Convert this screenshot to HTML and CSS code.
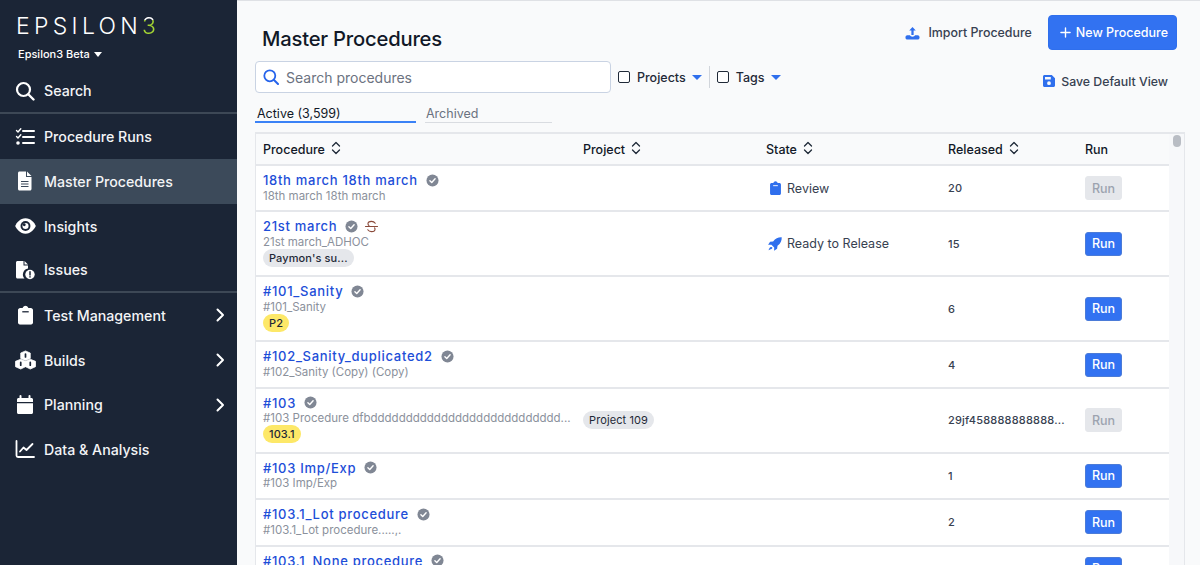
FILE: index.html
```html
<!DOCTYPE html>
<html lang="en">
<head>
    <meta charset="UTF-8">
    <meta name="viewport" content="width=device-width, initial-scale=1.0">
    <title>Master Procedures</title>
    <link rel="stylesheet" href="styles.css">
</head>
<body>
<svg class="icon-defs" aria-hidden="true">
    <symbol id="i-check" viewBox="0 0 14 14">
        <circle cx="7" cy="7" r="6.5" fill="#808794"/>
        <path d="M4.2 7.2l2 2 3.6-4" fill="none" stroke="#fff" stroke-width="1.5" stroke-linecap="round" stroke-linejoin="round"/>
    </symbol>
    <symbol id="i-sort" viewBox="0 0 10 14">
        <path d="M1.5 5L5 1.5 8.500 5M1.500 9L5 12.500 8.500 9" fill="none" stroke="currentColor" stroke-width="1.300" stroke-linecap="round" stroke-linejoin="round"/>
    </symbol>
    <symbol id="i-chevron" viewBox="0 0 10 14">
        <path d="M2.500 1.500L8 7l-5.500 5.500" fill="none" stroke="currentColor" stroke-width="2" stroke-linecap="round" stroke-linejoin="round"/>
    </symbol>
    <symbol id="i-clipboard" viewBox="0 0 14 18">
        <path d="M2 2.500h2.300C4.600 1.200 5.700.3 7 .3s2.400.9 2.700 2.200H12c1.100 0 2 .9 2 2V16c0 1.100-.9 2-2 2H2c-1.100 0-2-.9-2-2V4.500c0-1.100.9-2 2-2z" fill="currentColor"/>
    </symbol>
</svg>

<div class="app">
    <aside class="sidebar">
        <div class="logo">EPSILON<span class="logo-3">3</span></div>
        <div class="org">Epsilon3 Beta <span class="org-caret"></span></div>

        <nav class="nav">
            <a class="nav-item nav-sep" href="#">
                <svg class="nav-icon" viewBox="0 0 20 20"><circle cx="8.500" cy="8.500" r="6.500" fill="none" stroke="currentColor" stroke-width="2.200"/><path d="M13.500 13.500L18.500 18.500" stroke="currentColor" stroke-width="2.400" stroke-linecap="round"/></svg>
                <span>Search</span>
            </a>
            <a class="nav-item" href="#">
                <svg class="nav-icon" viewBox="0 0 20 20"><path d="M1.500 3.500l1.500 1.500 2.800-3.200M1.500 9.500l1.500 1.500 2.800-3.200" fill="none" stroke="currentColor" stroke-width="1.400" stroke-linecap="round" stroke-linejoin="round"/><circle cx="3" cy="16" r="1.800" fill="currentColor"/><path d="M8 4h11M8 10h11M8 16h11" stroke="currentColor" stroke-width="2" stroke-linecap="round"/></svg>
                <span>Procedure Runs</span>
            </a>
            <a class="nav-item nav-active" href="#">
                <svg class="nav-icon" viewBox="0 0 20 20"><path d="M4.500 .500h6.500v5.500h5.500v12c0 .8-.7 1.500-1.500 1.500H4.500C3.700 19.500 3 18.800 3 18V2C3 1.200 3.700.500 4.500.500zM12 .500l4.500 4.500H12z" fill="currentColor"/><path d="M6 10.500h7.500M6 13h7.500M6 15.500h7.500" stroke="#3c4a5a" stroke-width="1.100"/></svg>
                <span>Master Procedures</span>
            </a>
            <a class="nav-item" href="#">
                <svg class="nav-icon nav-icon-wide" viewBox="0 0 22 18"><path d="M11 1c5.600 0 9.300 4.700 10.800 8-1.500 3.300-5.200 8-10.800 8S1.700 12.300.2 9C1.700 5.700 5.400 1 11 1z" fill="currentColor"/><circle cx="11" cy="9" r="5.200" fill="#1b2536"/><circle cx="11" cy="9" r="3.200" fill="currentColor"/><circle cx="9.700" cy="7.700" r="1.500" fill="#1b2536"/></svg>
                <span>Insights</span>
            </a>
            <a class="nav-item nav-sep" href="#">
                <svg class="nav-icon" viewBox="0 0 20 20"><path d="M2.500 1h6v4.500h4.500v3a6 6 0 0 0-3.500 10H2.500C1.700 18.500 1 17.800 1 17V2.500C1 1.700 1.700 1 2.500 1zM9.500 1L13 4.500H9.500z" fill="currentColor"/><circle cx="15" cy="14.500" r="4.700" fill="currentColor"/><path d="M15 11.800v3.200M15 16.700v.4" stroke="#1b2536" stroke-width="1.500" stroke-linecap="round"/></svg>
                <span>Issues</span>
            </a>
            <a class="nav-item" href="#">
                <svg class="nav-icon nav-icon-clip" viewBox="0 0 14 18"><use href="#i-clipboard"/><path d="M4 6h6" stroke="#1b2536" stroke-width="1.200"/></svg>
                <span>Test Management</span>
                <svg class="nav-chevron"><use href="#i-chevron"/></svg>
            </a>
            <a class="nav-item" href="#">
                <svg class="nav-icon nav-icon-wide" viewBox="0 0 22 20"><path d="M11 .500l5 2.200v5.600l-5 2.200-5-2.200V2.700zM6 9.200l5 2.200v5.600l-5 2.500-5.500-2.500v-5.600zM16 9.200l5.500 2.200v5.600L16 19.500l-5-2.500v-5.600z" fill="currentColor" stroke="currentColor" stroke-width=".8" stroke-linejoin="round"/><path d="M11 3.800v3M6 12.500v3M16 12.500v3" stroke="#1b2536" stroke-width="1.800" stroke-linecap="round"/></svg>
                <span>Builds</span>
                <svg class="nav-chevron"><use href="#i-chevron"/></svg>
            </a>
            <a class="nav-item" href="#">
                <svg class="nav-icon" viewBox="0 0 20 20"><path d="M5.500 1v3M14.500 1v3" stroke="currentColor" stroke-width="2" stroke-linecap="round"/><path d="M3.500 3h13c.8 0 1.500.7 1.500 1.500V7H2V4.500C2 3.700 2.700 3 3.500 3zM2 8.300h16v9.200c0 .8-.7 1.500-1.500 1.500h-13c-.8 0-1.500-.7-1.500-1.500z" fill="currentColor"/></svg>
                <span>Planning</span>
                <svg class="nav-chevron"><use href="#i-chevron"/></svg>
            </a>
            <a class="nav-item" href="#">
                <svg class="nav-icon" viewBox="0 0 20 20"><path d="M1.500 2v14.500c0 .8.700 1.500 1.500 1.500h16" fill="none" stroke="currentColor" stroke-width="1.800" stroke-linecap="round"/><path d="M5 12.500l3.500-4 3 2.500 6-6" fill="none" stroke="currentColor" stroke-width="1.800" stroke-linecap="round" stroke-linejoin="round"/></svg>
                <span>Data &amp; Analysis</span>
            </a>
        </nav>
    </aside>

    <main class="main">
        <div class="top-row">
            <h1 class="page-title">Master Procedures</h1>
            <div class="top-actions">
                <a class="import-link" href="#">
                    <svg class="import-icon" viewBox="0 0 16 14"><path d="M8 .5l3.500 3.700H9.200V9H6.800V4.200H4.500z" fill="currentColor"/><path d="M.5 11.500c0-1.100.9-2 2-2h2.800c.3 1 1.400 1.500 2.700 1.500s2.400-.5 2.700-1.500h2.800c1.100 0 2 .9 2 2v.5c0 1.100-.9 2-2 2h-11c-1.100 0-2-.9-2-2z" fill="currentColor"/></svg>
                    <span>Import Procedure</span>
                </a>
                <button class="new-btn">
                    <svg class="plus-icon" viewBox="0 0 12 12"><path d="M6 1v10M1 6h10" stroke="currentColor" stroke-width="1.500" stroke-linecap="round"/></svg>
                    New Procedure
                </button>
            </div>
        </div>

        <div class="filter-row">
            <div class="search-box">
                <svg class="search-icon" viewBox="0 0 16 16"><circle cx="6.800" cy="6.800" r="5.500" fill="none" stroke="currentColor" stroke-width="1.800"/><path d="M11 11l4 4" stroke="currentColor" stroke-width="2" stroke-linecap="round"/></svg>
                <span class="search-text">Search procedures</span>
            </div>
            <div class="filter">
                <span class="check-box"></span>
                <span class="filter-label">Projects</span>
                <span class="filter-caret"></span>
            </div>
            <span class="filter-div"></span>
            <div class="filter">
                <span class="check-box"></span>
                <span class="filter-label">Tags</span>
                <span class="filter-caret"></span>
            </div>
            <a class="save-view" href="#">
                <svg class="save-icon" viewBox="0 0 12 12"><path d="M1.500 0h7.300L12 3.200v7.300c0 .8-.7 1.500-1.500 1.500h-9C.7 12 0 11.300 0 10.500v-9C0 .7.700 0 1.500 0zM2 2v2.600h5.800V2zM6 6.300a1.900 1.900 0 1 0 0 3.800 1.900 1.900 0 0 0 0-3.800z" fill="currentColor" fill-rule="evenodd"/></svg>
                <span>Save Default View</span>
            </a>
        </div>

        <div class="tabs">
            <div class="tab tab-on">Active (3,599)</div>
            <div class="tab">Archived</div>
        </div>

        <div class="table-wrap">
            <div class="table">
                <div class="row head-row">
                    <div class="head-cell">Procedure <svg class="sort-icon"><use href="#i-sort"/></svg></div>
                    <div class="head-cell">Project <svg class="sort-icon"><use href="#i-sort"/></svg></div>
                    <div class="head-cell">State <svg class="sort-icon"><use href="#i-sort"/></svg></div>
                    <div class="head-cell">Released <svg class="sort-icon"><use href="#i-sort"/></svg></div>
                    <div class="head-cell">Run</div>
                </div>

                <div class="row">
                    <div class="proc">
                        <div class="proc-name"><a href="#">18th march 18th march</a><svg class="check-icon"><use href="#i-check"/></svg></div>
                        <div class="proc-sub">18th march 18th march</div>
                    </div>
                    <div></div>
                    <div class="state">
                        <svg class="state-icon state-clip" viewBox="0 0 14 18"><use href="#i-clipboard"/><path d="M4 6h6" stroke="#fff" stroke-width="1.200"/></svg>
                        Review
                    </div>
                    <div class="released">20</div>
                    <div><button class="run-btn" disabled>Run</button></div>
                </div>

                <div class="row">
                    <div class="proc">
                        <div class="proc-name">
                            <a href="#">21st march</a><svg class="check-icon"><use href="#i-check"/></svg>
                            <svg class="strike-icon" viewBox="0 0 14 14"><path d="M11 3.500C10 2 8.700 1.500 7 1.500c-2.200 0-3.800 1-3.800 2.600 0 .8.300 1.400 1 1.900M3 10.500c1 1.500 2.300 2 4 2 2.200 0 3.800-1 3.800-2.600 0-.6-.2-1.100-.5-1.400" fill="none" stroke="#8a4a3a" stroke-width="1.200" stroke-linecap="round"/><path d="M.5 7h13" stroke="#8a4a3a" stroke-width="1.200" stroke-linecap="round"/></svg>
                        </div>
                        <div class="proc-sub">21st march_ADHOC</div>
                        <div class="chip">Paymon's su...</div>
                    </div>
                    <div></div>
                    <div class="state">
                        <svg class="state-icon state-rocket" viewBox="0 0 14 14"><path d="M13.700.3c.2 3.200-.9 6.200-4.200 8.500l-.4 3-3 2 .1-3.300-2.800-2.800-3.300.1 2-3 3-.4C7.500 1.200 10.500.1 13.700.3zM2.800 10c1.200-.4 2.100.6 1.300 1.600-.6.700-2 1-3.600 1.700.600-1.600 1-2.900 2.300-3.300z" fill="currentColor"/></svg>
                        Ready to Release
                    </div>
                    <div class="released">15</div>
                    <div><button class="run-btn">Run</button></div>
                </div>

                <div class="row">
                    <div class="proc">
                        <div class="proc-name"><a href="#">#101_Sanity</a><svg class="check-icon"><use href="#i-check"/></svg></div>
                        <div class="proc-sub">#101_Sanity</div>
                        <div class="chip chip-yellow">P2</div>
                    </div>
                    <div></div>
                    <div></div>
                    <div class="released">6</div>
                    <div><button class="run-btn">Run</button></div>
                </div>

                <div class="row">
                    <div class="proc">
                        <div class="proc-name"><a href="#">#102_Sanity_duplicated2</a><svg class="check-icon"><use href="#i-check"/></svg></div>
                        <div class="proc-sub">#102_Sanity (Copy) (Copy)</div>
                    </div>
                    <div></div>
                    <div></div>
                    <div class="released">4</div>
                    <div><button class="run-btn">Run</button></div>
                </div>

                <div class="row">
                    <div class="proc">
                        <div class="proc-name"><a href="#">#103</a><svg class="check-icon"><use href="#i-check"/></svg></div>
                        <div class="proc-sub">#103 Procedure dfbddddddddddddddddddddddddddd...</div>
                        <div class="chip chip-yellow">103.1</div>
                    </div>
                    <div><div class="chip chip-project">Project 109</div></div>
                    <div></div>
                    <div class="released">29jf458888888888...</div>
                    <div><button class="run-btn" disabled>Run</button></div>
                </div>

                <div class="row">
                    <div class="proc">
                        <div class="proc-name"><a href="#">#103 Imp/Exp</a><svg class="check-icon"><use href="#i-check"/></svg></div>
                        <div class="proc-sub">#103 Imp/Exp</div>
                    </div>
                    <div></div>
                    <div></div>
                    <div class="released">1</div>
                    <div><button class="run-btn">Run</button></div>
                </div>

                <div class="row">
                    <div class="proc">
                        <div class="proc-name"><a href="#">#103.1_Lot procedure</a><svg class="check-icon"><use href="#i-check"/></svg></div>
                        <div class="proc-sub">#103.1_Lot procedure.....,.</div>
                    </div>
                    <div></div>
                    <div></div>
                    <div class="released">2</div>
                    <div><button class="run-btn">Run</button></div>
                </div>

                <div class="row">
                    <div class="proc">
                        <div class="proc-name"><a href="#">#103.1_None procedure</a><svg class="check-icon"><use href="#i-check"/></svg></div>
                        <div class="proc-sub">#103.1_None procedure</div>
                    </div>
                    <div></div>
                    <div></div>
                    <div class="released">1</div>
                    <div><button class="run-btn">Run</button></div>
                </div>
            </div>
            <div class="scroll-track"><span class="scroll-thumb"></span></div>
        </div>
    </main>
</div>
</body>
</html>
```

FILE: styles.css
```css
* {
    box-sizing: border-box;
}
html, body {
    height: 100%;
}
body {
    margin: 0;
    overflow: hidden;
    font-family: Inter, "Liberation Sans", sans-serif;
    color: #111827;
    background-color: #f9fafb;
}
a {
    color: inherit;
    text-decoration: none;
}
.icon-defs {
    display: none;
}
.app {
    display: flex;
    height: 565px;
    overflow: hidden;
}

/* Sidebar */
.sidebar {
    flex: 0 0 237px;
    background-color: #1b2536;
    color: #fff;
    padding-top: 13px;
}
.logo {
    padding-left: 16px;
    height: 27px;
    font-size: 23px;
    line-height: 27px;
    font-weight: 300;
    letter-spacing: 4.3px;
}
.logo-3 {
    background: linear-gradient(#fff 30%, #a3d433 30%);
    -webkit-background-clip: text;
    background-clip: text;
    color: transparent;
}
.org {
    display: flex;
    align-items: center;
    gap: 4px;
    padding: 6px 0 0 18px;
    font-size: 11px;
    line-height: 16px;
    font-weight: 500;
}
.org-caret {
    width: 0;
    height: 0;
    border-left: 4px solid transparent;
    border-right: 4px solid transparent;
    border-top: 5px solid #fff;
}
.nav {
    margin-top: 7.600px;
}
.nav-item {
    display: flex;
    align-items: center;
    height: 44.7px;
    padding: 0 12px 0 15px;
    font-size: 14.200px;
    font-weight: 500;
    color: #f3f4f6;
}
.nav-sep {
    border-bottom: 2px solid #3d4856;
}
.nav-active {
    background-color: #3c4a5a;
}
.nav-icon {
    flex: none;
    width: 20px;
    height: 20px;
    margin-right: 9px;
    color: #fff;
}
.nav-icon-wide {
    width: 21px;
    margin-right: 8px;
}
.nav-icon-clip {
    width: 15px;
    margin: 0 11px 0 3px;
}
.nav-chevron {
    flex: none;
    width: 10px;
    height: 14px;
    margin-left: auto;
    color: #fff;
}

/* Page header */
.main {
    flex: 1;
    min-width: 0;
    border-top: 1px solid #dfe1e5;
    padding: 14px 16px 0 18px;
}
.top-row {
    display: flex;
    justify-content: space-between;
    height: 35px;
}
.page-title {
    margin: 8px 0 0 7px;
    font-size: 20.200px;
    line-height: 31px;
    font-weight: 500;
    letter-spacing: -0.2px;
    color: #111827;
}
.top-actions {
    display: flex;
    align-items: center;
    gap: 16px;
    margin-right: 7px;
}
.import-link {
    display: flex;
    align-items: center;
    gap: 8px;
    font-size: 12.400px;
    font-weight: 500;
    color: #374151;
}
.import-icon {
    width: 15px;
    height: 14px;
    color: #2f6fed;
}
.new-btn {
    display: flex;
    align-items: center;
    gap: 5px;
    height: 35px;
    padding: 0 8px 0 11px;
    border: 1px solid #2f6fed;
    border-radius: 4px;
    background-color: #3272f1;
    color: #fff;
    font-family: inherit;
    font-size: 12.500px;
    font-weight: 500;
}
.plus-icon {
    width: 11px;
    height: 11px;
}

/* Filters */
.filter-row {
    display: flex;
    align-items: center;
    height: 32px;
    margin-top: 11px;
}
.search-box {
    display: flex;
    align-items: center;
    gap: 7px;
    width: 356px;
    height: 32px;
    padding-left: 7px;
    background-color: #fff;
    border: 1px solid #c9d3e3;
    border-radius: 4px;
}
.search-icon {
    width: 16px;
    height: 16px;
    color: #2563eb;
}
.search-text {
    font-size: 14px;
    color: #6b7280;
}
.filter {
    display: flex;
    align-items: center;
    margin-left: 7px;
}
.check-box {
    width: 12px;
    height: 12px;
    border: 1.700px solid #1f2937;
    border-radius: 2px;
    background-color: #fff;
    margin-right: 7px;
}
.filter-label {
    font-size: 12.500px;
    font-weight: 500;
    color: #1f2937;
}
.filter-caret {
    width: 0;
    height: 0;
    margin-left: 6px;
    border-left: 5px solid transparent;
    border-right: 5px solid transparent;
    border-top: 5px solid #2f6fed;
}
.filter-div {
    width: 1px;
    height: 22px;
    margin-left: 7px;
    background-color: #d1d5db;
}
.save-view {
    display: flex;
    align-items: center;
    gap: 6px;
    margin: 8px 16px 0 auto;
    font-size: 12.300px;
    font-weight: 500;
    color: #374151;
}
.save-icon {
    width: 12px;
    height: 12px;
    color: #2f6fed;
}

/* Tabs */
.tabs {
    display: flex;
    gap: 9px;
    margin-top: 10px;
}
.tab {
    width: 127px;
    height: 20px;
    padding: 3px 0 0 1px;
    font-size: 12.500px;
    line-height: 16px;
    font-weight: 400;
    color: #6b7280;
    border-bottom: 1px solid #d9dce1;
}
.tab-on {
    width: 161px;
    padding-left: 2px;
    color: #111827;
    border-bottom: 2px solid #3b82f6;
}

/* Table */
.table-wrap {
    display: flex;
    margin-top: 9px;
    height: 440px;
    width: 930px;
    border: 1px solid #e5e7eb;
    border-bottom: none;
    border-top-width: 2px;
    overflow: hidden;
}
.table {
    flex: 0 0 913px;
}
.row {
    display: grid;
    grid-template-columns: 320px 183px 182px 137px 84px;
    align-items: center;
    padding-left: 7px;
    background-color: #fff;
    border-bottom: 2px solid #e5e7eb;
}
.head-row {
    height: 32px;
    background-color: #f9fafb;
    font-size: 12.500px;
    font-weight: 500;
}
.head-cell {
    display: flex;
    align-items: center;
    gap: 6px;
}
.sort-icon {
    width: 10px;
    height: 14px;
    margin-top: -2px;
    color: #1f2937;
}
.proc {
    min-width: 0;
    padding: 5.500px 8px 7.900px 0;
}
.proc-name {
    display: flex;
    align-items: center;
    height: 17px;
    font-size: 13px;
    font-weight: 500;
    letter-spacing: 0.7px;
    color: #1d4ed8;
}
.check-icon {
    flex: none;
    width: 13px;
    height: 13px;
    margin-left: 8px;
}
.strike-icon {
    width: 13px;
    height: 13px;
    margin-left: 7px;
}
.proc-sub {
    height: 14px;
    font-size: 11.500px;
    line-height: 14px;
    color: #8b919c;
    white-space: nowrap;
}
.chip {
    width: fit-content;
    height: 18px;
    margin-bottom: 0.600px;
    padding: 0 6px;
    border-radius: 9px;
    background-color: #e5e7eb;
    font-size: 11px;
    line-height: 18px;
    font-weight: 500;
    letter-spacing: 0.1px;
    color: #1f2937;
}
.chip-yellow {
    background-color: #fde868;
}
.chip-project {
    margin: 0;
    font-weight: 400;
}
.state {
    display: flex;
    align-items: center;
    font-size: 12.500px;
    color: #374151;
}
.state-icon {
    height: 14px;
    color: #2f6fed;
}
.state-clip {
    width: 11px;
    margin: 0 6px 0 4px;
}
.state-rocket {
    width: 14px;
    margin: 0 5px 0 2px;
}
.released {
    font-size: 11px;
    font-weight: 500;
    letter-spacing: 0.2px;
    color: #374151;
}
.run-btn {
    display: block;
    width: 37px;
    height: 24px;
    padding: 0;
    border: 1px solid #4b7bd8;
    border-radius: 3px;
    background-color: #3272f1;
    color: #fff;
    font-family: inherit;
    font-size: 12.500px;
    font-weight: 500;
}
.run-btn:disabled {
    border-color: #e5e7eb;
    background-color: #e5e7eb;
    color: #9ca3af;
}
.scroll-track {
    flex: 1;
    padding: 1px 3px 0 4px;
    background-color: #f7f8fa;
}
.scroll-thumb {
    display: block;
    height: 12px;
    border-radius: 4px;
    background-color: #b9bdc4;
}
```
